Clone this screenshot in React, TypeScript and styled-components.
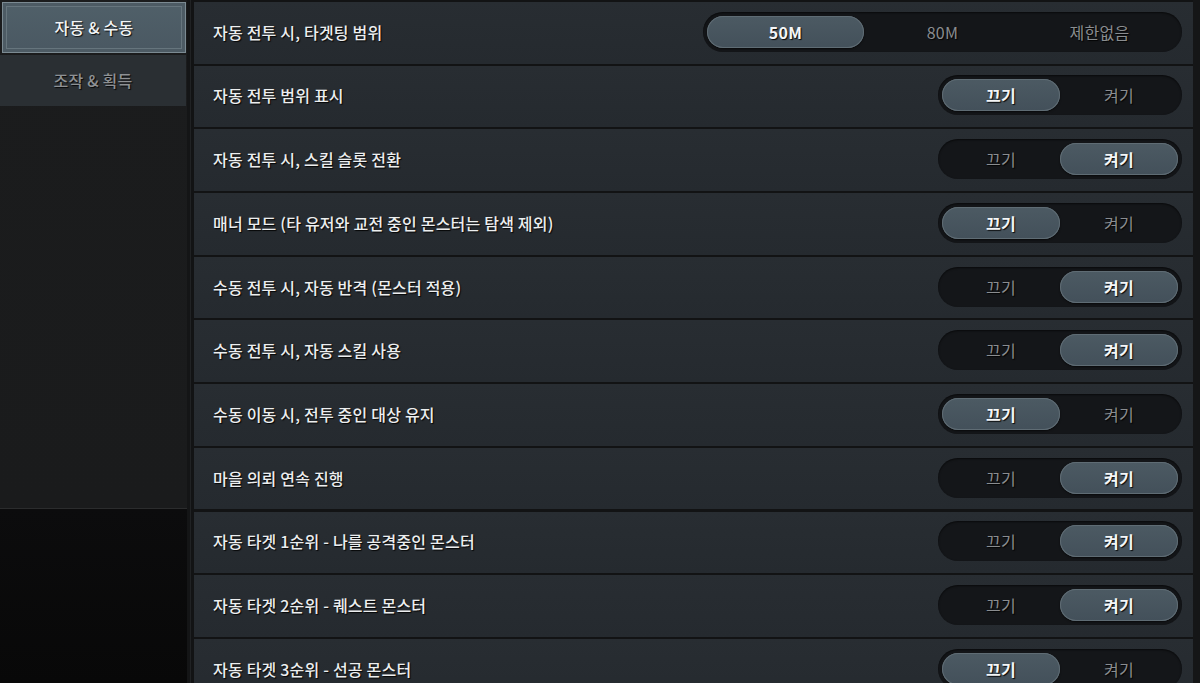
import React from 'react'
import styled, { createGlobalStyle } from 'styled-components'

const GlobalStyle = createGlobalStyle`
  html, body {
    margin: 0;
    padding: 0;
    background: #121314;
    overflow: hidden;
  }
  * {
    box-sizing: border-box;
  }
`

type Setting = {
  label: string
  options: string[]
  selected: number
}

const settings: Setting[] = [
  { label: '자동 전투 시, 타겟팅 범위', options: ['50M', '80M', '제한없음'], selected: 0 },
  { label: '자동 전투 범위 표시', options: ['끄기', '켜기'], selected: 0 },
  { label: '자동 전투 시, 스킬 슬롯 전환', options: ['끄기', '켜기'], selected: 1 },
  { label: '매너 모드 (타 유저와 교전 중인 몬스터는 탐색 제외)', options: ['끄기', '켜기'], selected: 0 },
  { label: '수동 전투 시, 자동 반격 (몬스터 적용)', options: ['끄기', '켜기'], selected: 1 },
  { label: '수동 전투 시, 자동 스킬 사용', options: ['끄기', '켜기'], selected: 1 },
  { label: '수동 이동 시, 전투 중인 대상 유지', options: ['끄기', '켜기'], selected: 0 },
  { label: '마을 의뢰 연속 진행', options: ['끄기', '켜기'], selected: 1 },
  { label: '자동 타겟 1순위 - 나를 공격중인 몬스터', options: ['끄기', '켜기'], selected: 1 },
  { label: '자동 타겟 2순위 - 퀘스트 몬스터', options: ['끄기', '켜기'], selected: 1 },
  { label: '자동 타겟 3순위 - 선공 몬스터', options: ['끄기', '켜기'], selected: 0 },
]

const tabs = ['자동 & 수동', '조작 & 획득']

const App: React.FC = () => {
  const rowElements = settings.map(setting => {
    const { label, options, selected } = setting
    return (
      <Row key={label}>
        <Label>{label}</Label>
        <Track>
          {options.map((option, index) => (
            <Segment key={option} $active={index === selected} $wide={options.length > 2}>
              {option}
            </Segment>
          ))}
        </Track>
      </Row>
    )
  })

  return (
    <>
      <GlobalStyle />
      <Screen>
        <Sidebar>
          {tabs.map((tab, index) => (
            <Tab key={tab} $active={index === 0}>
              {tab}
            </Tab>
          ))}
          <SidebarFill />
        </Sidebar>
        <Divider />
        <Content>{rowElements}</Content>
        <Edge />
      </Screen>
    </>
  )
}

const Screen = styled.div`
  display: flex;
  width: 1200px;
  height: 683px;
  overflow: hidden;
  font-family: 'Noto Sans CJK KR', 'Noto Sans', sans-serif;
  background: #121314;
`

const Sidebar = styled.div`
  width: 187px;
  flex-shrink: 0;
  display: flex;
  flex-direction: column;
  gap: 2px;
  padding-top: 2px;
  background: linear-gradient(
    to bottom,
    #1b1c1d 0,
    #1a1b1c 508px,
    #2b2c2d 508px,
    #2b2c2d 509px,
    #0c0c0d 509px,
    #080808 100%
  );
`

const Tab = styled.div<{ $active: boolean }>`
  height: 51px;
  margin-left: ${({ $active }) => ($active ? '2px' : '0')};
  margin-right: 1px;
  display: flex;
  align-items: center;
  justify-content: center;
  padding-bottom: 2px;
  font-size: 16px;
  font-weight: 500;
  letter-spacing: 0.2px;
  color: ${({ $active }) => ($active ? '#f2f4f5' : '#8e9194')};
  text-shadow: 1px 1px 1px rgba(0, 0, 0, 0.85);
  background: ${({ $active }) =>
    $active ? 'linear-gradient(to bottom, #506069, #4a5862)' : '#2a2f33'};
  border: ${({ $active }) => ($active ? '1px solid #7b8a92' : 'none')};
  box-shadow: ${({ $active }) =>
    $active ? 'inset 0 0 0 3px #4d5b64, inset 0 0 0 4px #66757d' : 'none'};
`

const SidebarFill = styled.div`
  flex: 1;
`

const Divider = styled.div`
  width: 7px;
  flex-shrink: 0;
  background: linear-gradient(to right, #141516 0, #141516 3px, #202224 3px, #202224 4px, #121314 4px);
`

const Content = styled.div`
  width: 999px;
  flex-shrink: 0;
  display: flex;
  flex-direction: column;
  gap: 2.2px;
  padding-top: 2px;
`

const Edge = styled.div`
  flex: 1;
  background: #151617;
`

const Row = styled.div`
  height: 61.5px;
  flex-shrink: 0;
  display: flex;
  align-items: center;
  justify-content: space-between;
  padding: 0 11px 2px 19px;
  background: linear-gradient(to bottom, #282d32, #252a2f);
`

const Label = styled.span`
  font-size: 16px;
  font-weight: 500;
  letter-spacing: 0.2px;
  color: #eceeef;
  text-shadow: 1px 1px 1px rgba(0, 0, 0, 0.9);
`

const Track = styled.div`
  display: flex;
  align-items: center;
  height: 40px;
  padding: 0 4px;
  border-radius: 20px;
  background: #141619;
  box-shadow: inset 0 1px 2px rgba(0, 0, 0, 0.6);
`

const Segment = styled.div<{ $active: boolean; $wide: boolean }>`
  width: ${({ $wide }) => ($wide ? '157px' : '118px')};
  height: 32px;
  display: flex;
  align-items: center;
  justify-content: center;
  border-radius: 16px;
  font-size: 16px;
  letter-spacing: 0.3px;
  font-weight: ${({ $active }) => ($active ? 700 : 400)};
  color: ${({ $active }) => ($active ? '#f4f6f7' : '#8a8d90')};
  text-shadow: 1px 1px 1px rgba(0, 0, 0, 0.9);
  background: ${({ $active }) => ($active ? 'linear-gradient(to bottom, #4c5a63, #43505a)' : 'transparent')};
  box-shadow: ${({ $active }) =>
    $active ? 'inset 0 0 0 1px #5f6c74, 0 1px 2px rgba(0, 0, 0, 0.6)' : 'none'};
`

export default App
